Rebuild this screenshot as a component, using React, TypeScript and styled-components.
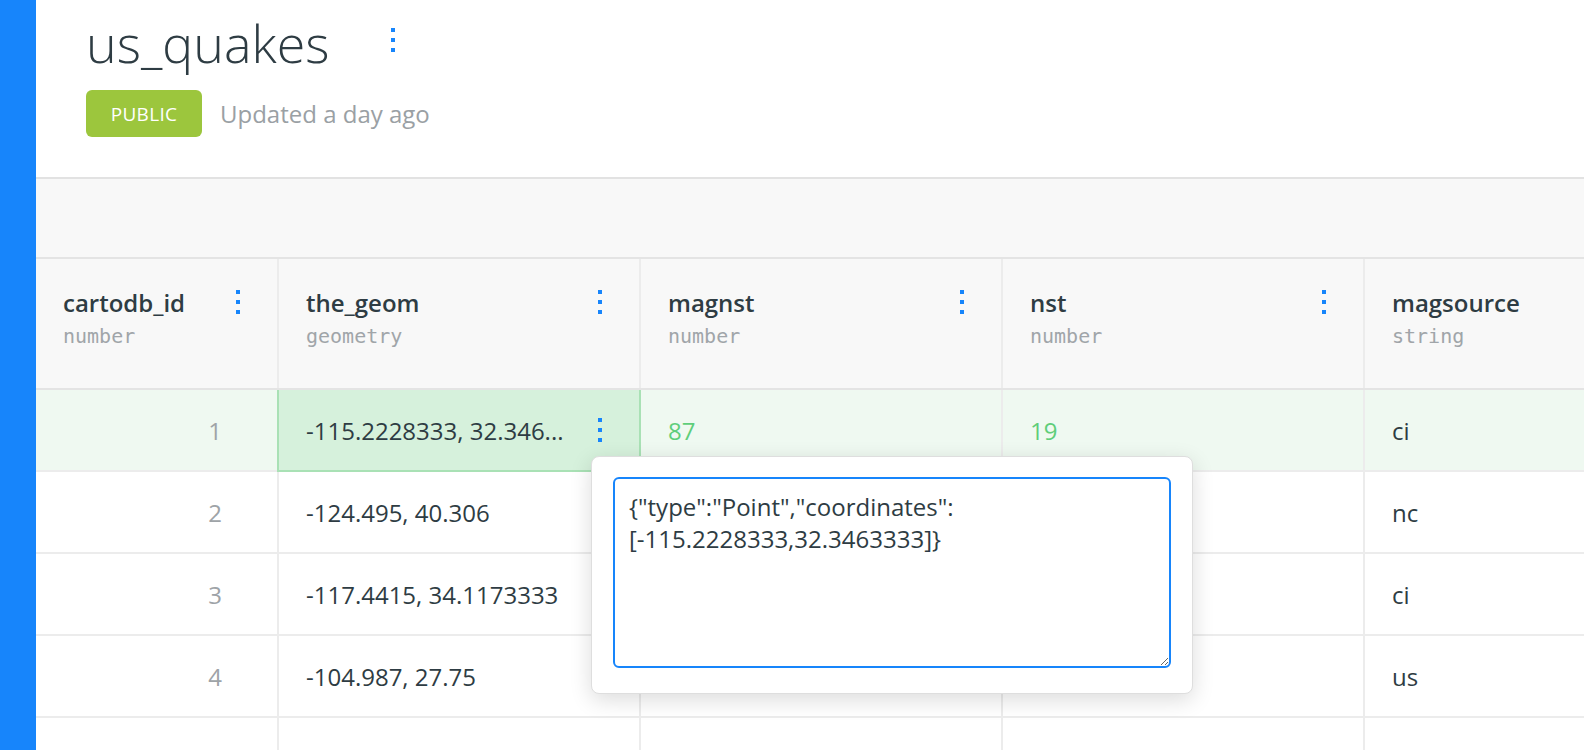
import React, { useEffect, useRef } from "react";
import styled, { createGlobalStyle } from "styled-components";

const GlobalStyle = createGlobalStyle`
  html, body { margin: 0; padding: 0; overflow: hidden; background: #ffffff; }
  body { font-family: "Open Sans", "Noto Sans", sans-serif; color: #2e3c43; }
  *, *::before, *::after { box-sizing: border-box; }
`;

const BLUE = "#1785fb";
const COLS = "241px repeat(4, 362px)";

const Page = styled.div`
  display: flex;
  width: 1584px;
  height: 750px;
  overflow: hidden;
`;

const Sidebar = styled.aside`
  flex: 0 0 36px;
  background: ${BLUE};
`;

const Main = styled.main`
  position: relative;
  flex: 1;
  min-width: 0;
  display: flex;
  flex-direction: column;
  overflow: hidden;
`;

const Header = styled.header`
  flex: none;
  height: 179px;
  padding: 8px 0 0 50px;
  border-bottom: 2px solid #e2e2e2;
  background: #ffffff;
`;

const TitleRow = styled.div`
  display: flex;
  align-items: center;
`;

const Title = styled.h1`
  margin: 0;
  font-size: 52px;
  font-weight: 300;
  line-height: 70px;
  color: #2e3c43;
`;

const Kebab = styled.span<{ $ml?: number; $mt?: number; $mb?: number }>`
  display: inline-flex;
  flex-direction: column;
  gap: 6px;
  flex: none;
  margin-left: ${(p) => p.$ml ?? 0}px;
  margin-top: ${(p) => p.$mt ?? 0}px;
  margin-bottom: ${(p) => p.$mb ?? 0}px;
  i {
    display: block;
    width: 4px;
    height: 4px;
    background: ${BLUE};
  }
`;

const Dots = (props: { $ml?: number; $mt?: number; $mb?: number }) => (
  <Kebab {...props}>
    <i />
    <i />
    <i />
  </Kebab>
);

const MetaRow = styled.div`
  display: flex;
  align-items: center;
  gap: 18px;
  margin-top: 12px;
`;

const Badge = styled.span`
  display: flex;
  align-items: center;
  justify-content: center;
  width: 116px;
  height: 47px;
  border-radius: 6px;
  background: #9cc63d;
  color: #ffffff;
  font-size: 19px;
  letter-spacing: 0.3px;
`;

const Updated = styled.span`
  font-size: 24px;
  color: #9aa0a4;
`;

const Toolbar = styled.div`
  flex: none;
  height: 80px;
  background: #f8f8f8;
  border-bottom: 2px solid #e4e4e4;
`;

const HeadRow = styled.div`
  flex: none;
  display: grid;
  grid-template-columns: ${COLS};
  height: 131px;
  background: #f8f8f8;
  border-bottom: 2px solid #e4e4e4;
`;

const HeadCell = styled.div<{ $first?: boolean }>`
  display: flex;
  justify-content: space-between;
  align-items: flex-start;
  padding: 27px 37px 0 27px;
  border-left: ${(p) => (p.$first ? "none" : "2px solid #ececec")};
`;

const ColName = styled.div`
  font-size: 24px;
  font-weight: 600;
  line-height: 33px;
  color: #2e3c43;
`;

const ColType = styled.div`
  margin-top: 3px;
  font-family: "DejaVu Sans Mono", "Liberation Mono", monospace;
  font-size: 20px;
  line-height: 28px;
  color: #a0a5a9;
`;

const DataRow = styled.div<{ $selected?: boolean }>`
  display: grid;
  grid-template-columns: ${COLS};
  height: 82px;
  flex: none;
  border-bottom: 2px solid #ececec;
  background: ${(p) => (p.$selected ? "#eff9f1" : "#ffffff")};
`;

type Tone = "default" | "muted" | "green";

const toneColor: Record<Tone, string> = {
  default: "#2e3c43",
  muted: "#9ea3a7",
  green: "#5fce7a",
};

const Cell = styled.div<{ $first?: boolean; $right?: boolean; $tone?: Tone; $active?: boolean }>`
  position: relative;
  display: flex;
  align-items: center;
  justify-content: ${(p) => (p.$right ? "flex-end" : "space-between")};
  padding: ${(p) => (p.$right ? "0 55px 0 27px" : "0 37px 0 27px")};
  border-left: ${(p) => (p.$first ? "none" : `2px solid ${p.$active ? "#a9e1b5" : "#ececec"}`)};
  background: ${(p) => (p.$active ? "#d6f1dc" : "transparent")};
  font-size: 24px;
  white-space: nowrap;
  color: ${(p) => toneColor[p.$tone ?? "default"]};
  ${(p) =>
    p.$active
      ? `&::after {
          content: "";
          position: absolute;
          top: 0;
          left: -2px;
          right: -2px;
          bottom: -2px;
          border: 2px solid #a9e1b5;
          border-top: 0;
          pointer-events: none;
          z-index: 1;
        }`
      : ""}
`;

const CellText = styled.span`
  overflow: hidden;
  text-overflow: ellipsis;
`;

const Popup = styled.div`
  position: absolute;
  left: 555px;
  top: 456px;
  width: 602px;
  height: 238px;
  padding: 20px 21px 25px;
  background: #ffffff;
  border: 1px solid #dedede;
  border-radius: 8px;
  box-shadow: 0 6px 22px rgba(0, 0, 0, 0.14);
  z-index: 5;
`;

const Editor = styled.textarea`
  display: block;
  width: 100%;
  height: 191px;
  margin: 0;
  padding: 12px 14px;
  border: 2px solid ${BLUE};
  border-radius: 6px;
  outline: none;
  font-family: "Open Sans", "Noto Sans", sans-serif;
  font-size: 24px;
  line-height: 32px;
  color: #2e3c43;
  background: #ffffff;
  caret-color: #2e3c43;
`;

const columns = [
  { name: "cartodb_id", type: "number", menu: true },
  { name: "the_geom", type: "geometry", menu: true },
  { name: "magnst", type: "number", menu: true },
  { name: "nst", type: "number", menu: true },
  { name: "magsource", type: "string", menu: false },
];

type Row = {
  id: number;
  geom: string;
  magnst: string | null;
  nst: string | null;
  src: string;
};

const rows: Row[] = [
  { id: 1, geom: "-115.2228333, 32.346...", magnst: "87", nst: "19", src: "ci" },
  { id: 2, geom: "-124.495, 40.306", magnst: "12", nst: "23", src: "nc" },
  { id: 3, geom: "-117.4415, 34.1173333", magnst: "41", nst: "38", src: "ci" },
  { id: 4, geom: "-104.987, 27.75", magnst: "9", nst: "14", src: "us" },
  { id: 5, geom: "-66.57, 47.01", magnst: null, nst: "11", src: "nc" },
];

const GEOJSON = '{"type":"Point","coordinates":[-115.2228333,32.3463333]}';

export default function App() {
  const ref = useRef<HTMLTextAreaElement>(null);

  useEffect(() => {
    const el = ref.current;
    if (el) {
      el.focus();
      el.setSelectionRange(GEOJSON.length, GEOJSON.length);
    }
  }, []);

  return (
    <>
      <GlobalStyle />
      <Page>
        <Sidebar />
        <Main>
          <Header>
            <TitleRow>
              <Title>us_quakes</Title>
              <Dots $ml={62} $mb={6} />
            </TitleRow>
            <MetaRow>
              <Badge>PUBLIC</Badge>
              <Updated>Updated a day ago</Updated>
            </MetaRow>
          </Header>
          <Toolbar />
          <HeadRow>
            {columns.map((c, i) => (
              <HeadCell key={c.name} $first={i === 0}>
                <div>
                  <ColName>{c.name}</ColName>
                  <ColType>{c.type}</ColType>
                </div>
                {c.menu && <Dots $mt={4} />}
              </HeadCell>
            ))}
          </HeadRow>
          {rows.map((r) => {
            const selected = r.id === 1;
            return (
              <DataRow key={r.id} $selected={selected}>
                <Cell $first $right $tone="muted">
                  {r.id}
                </Cell>
                <Cell $active={selected}>
                  <CellText>{r.geom}</CellText>
                  {selected && <Dots />}
                </Cell>
                <Cell $tone={r.magnst === null ? "muted" : "green"}>
                  <CellText>{r.magnst ?? "null"}</CellText>
                </Cell>
                <Cell $tone={r.nst === null ? "muted" : "green"}>
                  <CellText>{r.nst ?? "null"}</CellText>
                </Cell>
                <Cell>
                  <CellText>{r.src}</CellText>
                </Cell>
              </DataRow>
            );
          })}
          <Popup>
            <Editor ref={ref} defaultValue={GEOJSON} spellCheck={false} />
          </Popup>
        </Main>
      </Page>
    </>
  );
}
